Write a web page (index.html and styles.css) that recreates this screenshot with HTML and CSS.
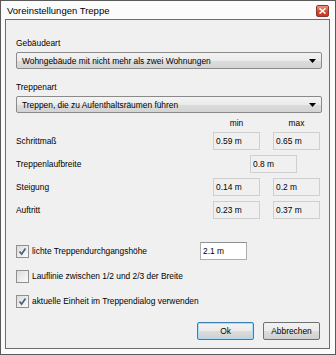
FILE: index.html
```
<!DOCTYPE html>
<html>
<head>
<meta charset="utf-8">
<link rel="stylesheet" href="styles.css">
</head>
<body>
<div class="window">
  <div class="titlebar">
    <span class="title">Voreinstellungen Treppe</span>
    <span class="close"><svg width="7" height="6" viewBox="0 0 7 6"><path d="M0.5 0.5 L6.5 5.5 M6.5 0.5 L0.5 5.5" stroke="#fff" stroke-width="1.6"/></svg></span>
  </div>
  <div class="client">
    <div class="label">Gebäudeart</div>
    <div class="combo"><span>Wohngebäude mit nicht mehr als zwei Wohnungen</span><svg class="arrow" width="7" height="4" viewBox="0 0 7 4"><path d="M0 0 H7 L3.5 4 Z" fill="#000"/></svg></div>
    <div class="label">Treppenart</div>
    <div class="combo"><span>Treppen, die zu Aufenthaltsräumen führen</span><svg class="arrow" width="7" height="4" viewBox="0 0 7 4"><path d="M0 0 H7 L3.5 4 Z" fill="#000"/></svg></div>

    <div class="grid head">
      <div></div><div class="hdr">min</div><div class="hdr">max</div>
    </div>
    <div class="grid values">
      <div class="rowlabel">Schrittmaß</div><div class="field">0.59 m</div><div class="field">0.65 m</div>
      <div class="rowlabel">Treppenlaufbreite</div><div class="field mid">0.8 m</div>
      <div class="rowlabel">Steigung</div><div class="field">0.14 m</div><div class="field">0.2 m</div>
      <div class="rowlabel">Auftritt</div><div class="field">0.23 m</div><div class="field">0.37 m</div>
    </div>

    <div class="checks">
      <div class="check withedit">
        <div class="checkline"><span class="cb"><svg width="9" height="9" viewBox="0 0 9 9"><path d="M1.5 4.5 L3.6 7 L7.5 1.5" fill="none" stroke="#4d6185" stroke-width="1.7"/></svg></span><span>lichte Treppendurchgangshöhe</span></div>
        <div class="edit">2.1 m</div>
      </div>
      <div class="check"><span class="cb"></span><span>Lauflinie zwischen 1/2 und 2/3 der Breite</span></div>
      <div class="check"><span class="cb"><svg width="9" height="9" viewBox="0 0 9 9"><path d="M1.5 4.5 L3.6 7 L7.5 1.5" fill="none" stroke="#4d6185" stroke-width="1.7"/></svg></span><span>aktuelle Einheit im Treppendialog verwenden</span></div>
    </div>

    <div class="buttons">
      <div class="btn default">Ok</div>
      <div class="btn">Abbrechen</div>
    </div>
  </div>
</div>
</body>
</html>
```
FILE: styles.css
```
html, body {
  margin: 0;
  padding: 0;
  background: #ffffff;
}
.window {
  box-sizing: border-box;
  width: 336px;
  height: 355px;
  border: 1px solid #5a5a5a;
  background: #fbfbfb;
  padding: 0 5px 5px 4px;
  display: flex;
  flex-direction: column;
  font-family: "Liberation Sans", Arial, sans-serif;
  font-size: 8.4px;
  color: #000;
}
.titlebar {
  height: 18px;
  display: flex;
  align-items: center;
  justify-content: space-between;
  padding-left: 2px;
}
.title {
  font-size: 9.5px;
  padding-top: 1px;
}
.close {
  width: 13px;
  height: 12px;
  margin-right: 1px;
  margin-top: 1px;
  box-sizing: border-box;
  border: 1px solid #8a3a2e;
  border-radius: 2px;
  background: linear-gradient(#e99a85, #d2472d 55%, #c9381e);
  display: flex;
  align-items: center;
  justify-content: center;
}
.client {
  flex: 1;
  border: 1px solid #6e6e6e;
  background: #f0f0f0;
  padding: 16px 8px 0 10px;
}
.label {
  height: 14px;
  line-height: 14px;
}
.label + .combo {
  margin-top: 2px;
}
.combo {
  box-sizing: border-box;
  width: 306px;
  height: 17px;
  border: 1px solid #8a8a8a;
  border-radius: 2px;
  background: linear-gradient(#f4f4f4, #ebebeb 50%, #dcdcdc 51%, #d4d4d4);
  display: flex;
  align-items: center;
  justify-content: space-between;
  padding: 0 5px 0 5px;
  margin-bottom: 11px;
}
.combo:last-of-type {
  margin-bottom: 0;
}
.grid {
  display: grid;
  grid-template-columns: 184px 47px 47px;
  column-gap: 13px;
}
.head {
  margin-top: -7px;
  height: 12px;
  line-height: 12px;
}
.hdr {
  text-align: center;
}
.values {
  margin-top: 3px;
  grid-auto-rows: 18px;
  row-gap: 5px;
}
.rowlabel {
  grid-column: 1;
  line-height: 18px;
}
.field {
  box-sizing: border-box;
  height: 18px;
  border: 1px solid #cfcfcf;
  background: #f0f0f0;
  line-height: 16px;
  padding-left: 2px;
}
.field.mid {
  grid-column: 2 / 4;
  width: 47px;
  margin-left: 37px;
}
.checks {
  margin-top: 23px;
  display: flex;
  flex-direction: column;
  gap: 7px;
}
.check {
  height: 18px;
  display: flex;
  align-items: center;
  gap: 3px;
}
.check.withedit {
  display: grid;
  grid-template-columns: 184px 47px;
  gap: 0;
}
.checkline {
  display: flex;
  align-items: center;
  gap: 3px;
}
.cb {
  box-sizing: border-box;
  width: 13px;
  height: 13px;
  border: 1px solid #8f8f8f;
  background: linear-gradient(135deg, #dcdcdc, #fbfbfb);
  display: flex;
  align-items: center;
  justify-content: center;
}
.edit {
  box-sizing: border-box;
  height: 18px;
  border: 1px solid #abadb3;
  border-top-color: #8f9196;
  background: #fff;
  line-height: 16px;
  padding-left: 2px;
}
.buttons {
  margin-top: 12px;
  display: flex;
  justify-content: flex-end;
  gap: 9px;
  padding-right: 1px;
}
.btn {
  box-sizing: border-box;
  width: 57px;
  height: 18px;
  border: 1px solid #707070;
  border-radius: 2px;
  background: linear-gradient(#f2f2f2, #ebebeb 50%, #dddddd 51%, #cfcfcf);
  text-align: center;
  line-height: 16px;
}
.btn.default {
  border-color: #3c7fb1;
  box-shadow: inset 0 0 0 1px #a9dbf6;
}
```
